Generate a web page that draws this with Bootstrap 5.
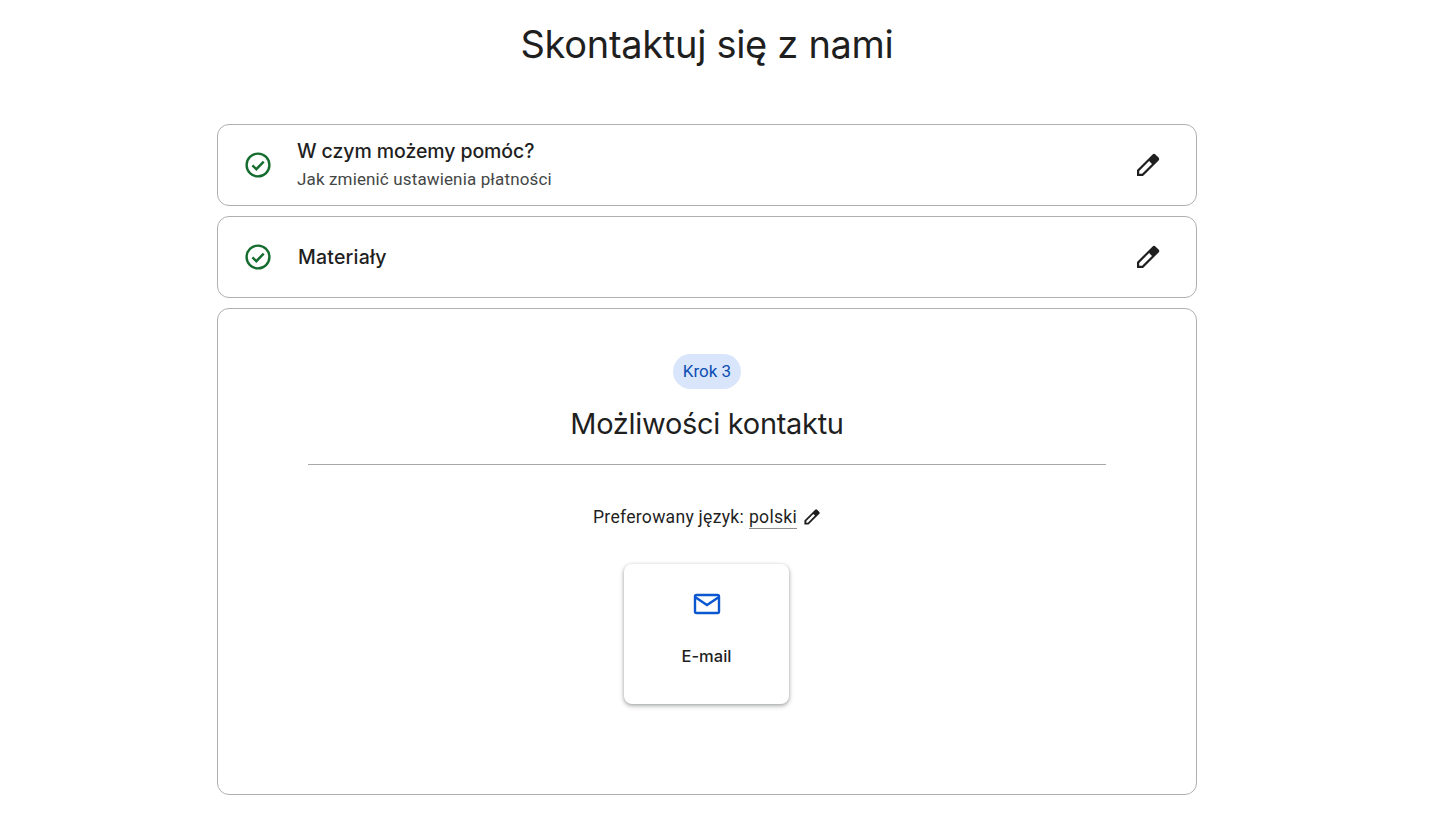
<!DOCTYPE html>
<html lang="pl">
<head>
<meta charset="utf-8">
<title>Skontaktuj się z nami</title>
<link href="https://cdn.jsdelivr.net/npm/bootstrap@5.3.0/dist/css/bootstrap.min.css" rel="stylesheet">
<style>
html,body{background:#fff;overflow:hidden;height:821px}
body{font-family:Inter,"Liberation Sans",sans-serif;color:#1f1f1f}
.page-wrap{width:1414px}
.page-title{font-size:38px;line-height:48px;font-weight:400;margin:0;padding-top:20px;height:124px;letter-spacing:-.3px}
.flow-col{width:980px}
.step-box{border:1px solid #b0b0b0;border-radius:12px;background:#fff}
.step-done{height:82px;margin-bottom:10px;padding:0 35px 0 26px}
.step-head{font-size:19.5px;line-height:24px;font-weight:500;letter-spacing:-.08px}
.step-head-wide{letter-spacing:.2px;padding-left:1px}
.step-sub{font-family:Roboto,sans-serif;font-size:17px;line-height:24px;color:#444746;margin-top:4px;letter-spacing:.14px}
.step-check{margin-right:25px;flex:none}
.step-open{height:487px;padding:45px 90px 0}
.step-pill{background:#d9e5fa;color:#0b4eb3;font-family:Roboto,sans-serif;font-size:17px;line-height:35px;height:35px;padding:0 10px;border-radius:18px}
.step-title{font-size:29px;line-height:36px;font-weight:400;margin:17px 0 22px;letter-spacing:-.3px}
.step-rule{border-top:1px solid #a8a8a8;width:100%;height:0}
.lang-line{font-family:Roboto,sans-serif;font-size:17.6px;line-height:24px;margin-top:40px;color:#1f1f1f;letter-spacing:.26px}
.lang-link{border-bottom:1px solid #8f8f8f;line-height:22px;margin-left:5px;margin-right:6px}
.mail-tile{width:165px;height:140px;margin:35px 1px 0 0;border-radius:8px;background:#fff;box-shadow:0 1px 3px rgba(60,64,67,.3),0 2px 4px 1px rgba(60,64,67,.22)}
.mail-label{font-size:16.5px;line-height:24px;font-weight:500;margin-top:28px}
.mail-tile svg{margin-top:28px}
</style>
</head>
<body>
<div class="page-wrap d-flex flex-column align-items-center">
  <h1 class="page-title text-center">Skontaktuj się z nami</h1>
  <div class="flow-col">
    <div class="step-box step-done d-flex align-items-center">
      <svg class="step-check" width="28" height="28" viewBox="0 0 28 28" fill="none" stroke="#146c2e" stroke-width="2.4"><circle cx="14" cy="14" r="11.4"/><path d="M8.4 14.3l3.9 3.9 7.4-7.6"/></svg>
      <div class="flex-grow-1">
        <div class="step-head">W czym możemy pomóc?</div>
        <div class="step-sub">Jak zmienić ustawienia płatności</div>
      </div>
      <svg width="26" height="26" viewBox="0 0 26 26"><path fill="#1f1f1f" fill-rule="evenodd" d="M2 24v-6L17.6 2.4a2 2 0 0 1 2.8 0l3.2 3.2a2 2 0 0 1 0 2.8L8 24zM4.2 21.8h2.9L17 11.9 14.1 9 4.2 18.9z"/></svg>
    </div>
    <div class="step-box step-done d-flex align-items-center">
      <svg class="step-check" width="28" height="28" viewBox="0 0 28 28" fill="none" stroke="#146c2e" stroke-width="2.4"><circle cx="14" cy="14" r="11.4"/><path d="M8.4 14.3l3.9 3.9 7.4-7.6"/></svg>
      <div class="flex-grow-1 step-head step-head-wide">Materiały</div>
      <svg width="26" height="26" viewBox="0 0 26 26"><path fill="#1f1f1f" fill-rule="evenodd" d="M2 24v-6L17.6 2.4a2 2 0 0 1 2.8 0l3.2 3.2a2 2 0 0 1 0 2.8L8 24zM4.2 21.8h2.9L17 11.9 14.1 9 4.2 18.9z"/></svg>
    </div>
    <div class="step-box step-open d-flex flex-column align-items-center">
      <div class="step-pill">Krok 3</div>
      <h2 class="step-title">Możliwości kontaktu</h2>
      <div class="step-rule"></div>
      <div class="lang-line d-flex align-items-center">Preferowany język: <span class="lang-link">polski</span>
        <svg width="18" height="18" viewBox="0 0 26 26"><path fill="#1f1f1f" fill-rule="evenodd" d="M2 24v-6L17.6 2.4a2 2 0 0 1 2.8 0l3.2 3.2a2 2 0 0 1 0 2.8L8 24zM4.8 21.2h2.2L17.3 11 14.9 8.7 4.8 18.9z"/></svg>
      </div>
      <div class="mail-tile d-flex flex-column align-items-center">
        <svg width="30" height="24" viewBox="0 0 30 24" fill="none" stroke="#0b57d0" stroke-width="2.4"><rect x="3" y="3" width="24" height="18" rx="1.5"/><path d="M3 5l12 8 12-8"/></svg>
        <div class="mail-label">E-mail</div>
      </div>
    </div>
  </div>
</div>
<script src="https://cdn.jsdelivr.net/npm/bootstrap@5.3.0/dist/js/bootstrap.bundle.min.js"></script>
</body>
</html>
